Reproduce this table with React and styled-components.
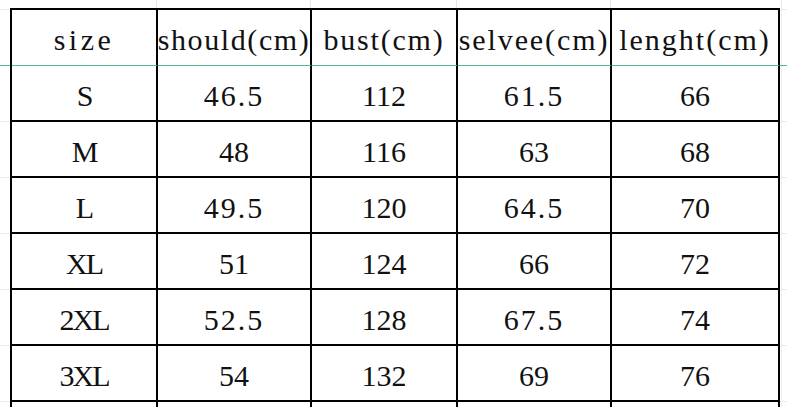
import styled, { createGlobalStyle } from "styled-components";

const GlobalStyle = createGlobalStyle`
  html, body {
    margin: 0;
    padding: 0;
    background: #fff;
  }
`;

const Sheet = styled.div`
  width: 787px;
  height: 407px;
  overflow: hidden;
  box-sizing: border-box;
  padding: 8px 0 0 10px;
  background-color: #fff;
  background-image:
    linear-gradient(to bottom, transparent 65px, #52b9a2 65px, #52b9a2 66px, transparent 66px),
    linear-gradient(
      to right,
      transparent 156px, #e8e8e8 156px, #e8e8e8 157px, transparent 157px,
      transparent 310px, #e8e8e8 310px, #e8e8e8 311px, transparent 311px,
      transparent 456px, #e8e8e8 456px, #e8e8e8 457px, transparent 457px,
      transparent 610px, #e8e8e8 610px, #e8e8e8 611px, transparent 611px,
      transparent 781px, #ececec 781px, #ececec 782px, transparent 782px
    ),
    repeating-linear-gradient(
      to bottom,
      transparent 0, transparent 9px,
      #ececec 9px, #ececec 10px,
      transparent 10px, transparent 56px
    );
`;

const Table = styled.div`
  display: grid;
  grid-template-columns: 146px 154px 146px 154px 168px;
  grid-auto-rows: 56px;
  width: max-content;
  border-left: 2px solid #000;
  border-top: 2px solid #000;
  font-family: "Liberation Serif", "DejaVu Serif", serif;
  color: #111;
`;

const Cell = styled.div`
  box-sizing: border-box;
  display: flex;
  align-items: center;
  justify-content: center;
  padding-top: 5px;
  background: #fff;
  border-right: 2px solid #000;
  border-bottom: ${(p) => (p.$head ? "1px solid #52b9a2" : "2px solid #000")};
  font-size: 30px;
  line-height: 30px;
  white-space: nowrap;
  letter-spacing: ${(p) => p.$spacing || 0}px;
`;

const headers = [
  { label: "size", spacing: 3.5 },
  { label: "should(cm)", spacing: 1.6 },
  { label: "bust(cm)", spacing: 1.8 },
  { label: "selvee(cm)", spacing: 1.9 },
  { label: "lenght(cm)", spacing: 2 },
];

const rows = [
  ["S", "46.5", "112", "61.5", "66"],
  ["M", "48", "116", "63", "68"],
  ["L", "49.5", "120", "64.5", "70"],
  ["XL", "51", "124", "66", "72"],
  ["2XL", "52.5", "128", "67.5", "74"],
  ["3XL", "54", "132", "69", "76"],
  ["", "", "", "", ""],
];

export default function App() {
  return (
    <>
      <GlobalStyle />
      <Sheet>
        <Table>
          {headers.map((h) => (
            <Cell key={h.label} $head $spacing={h.spacing}>
              {h.label}
            </Cell>
          ))}
          {rows.map((row, i) =>
            row.map((value, j) => (
              <Cell key={`${i}-${j}`} $spacing={j === 0 ? -2 : value.includes(".") ? 2 : 0}>
                {value}
              </Cell>
            ))
          )}
        </Table>
      </Sheet>
    </>
  );
}
